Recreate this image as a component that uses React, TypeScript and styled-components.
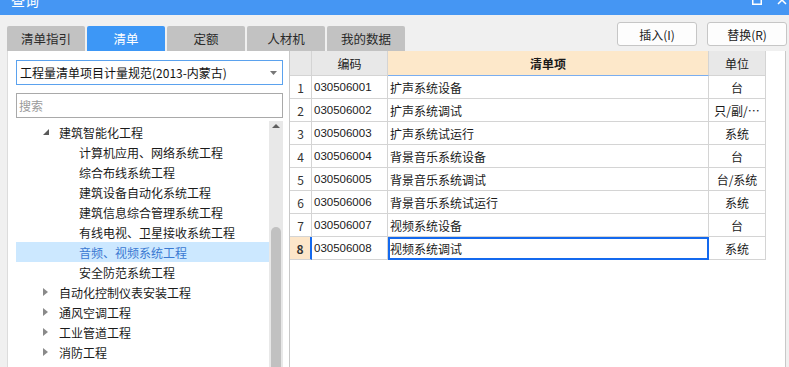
import React from 'react';
import styled, { createGlobalStyle } from 'styled-components';

const GlobalStyle = createGlobalStyle`
  html, body { margin: 0; padding: 0; background: #f0f0f0; }
  body {
    font-family: "Noto Sans CJK SC", "Liberation Sans", sans-serif;
    font-size: 12px;
    color: #1a1a1a;
  }
  * { box-sizing: border-box; }
`;

const Window = styled.div`
  width: 789px;
  height: 367px;
  overflow: hidden;
  display: flex;
  flex-direction: column;
  background: #f0f0f0;
`;

const TitleBar = styled.div`
  flex: none;
  height: 30px;
  margin-top: -15px;
  background: #4596f3;
  color: #fff;
  display: flex;
  align-items: center;
  padding: 0 2px 0 11px;
`;

const Title = styled.div`
  flex: 1;
  font-size: 14px;
  line-height: 1;
`;

const WinControls = styled.div`
  display: flex;
  align-items: center;
  gap: 15px;
`;

const Toolbar = styled.div`
  flex: none;
  height: 36px;
  display: flex;
  align-items: flex-start;
  padding: 0 2px 0 7px;
`;

const Tabs = styled.div`
  flex: 1;
  align-self: flex-end;
  display: flex;
  gap: 2px;
`;

const Tab = styled.div<{ $active?: boolean }>`
  width: 78px;
  height: 25px;
  border-radius: 2px 2px 0 0;
  background: ${(p) => (p.$active ? '#3d97f6' : '#c2c2c2')};
  color: ${(p) => (p.$active ? '#ffffff' : '#2a2a2a')};
  display: flex;
  align-items: center;
  justify-content: center;
  font-size: 12.5px;
`;

const Actions = styled.div`
  display: flex;
  gap: 10px;
  margin-top: 7px;
`;

const Button = styled.button`
  width: 80px;
  height: 24px;
  padding: 0;
  border: 1px solid #c6c6c6;
  border-radius: 3px;
  background: #fdfdfd;
  color: #222;
  font-family: inherit;
  font-size: 12px;
`;

const Body = styled.div`
  flex: 1;
  min-height: 0;
  display: flex;
  padding-left: 7px;
`;

const LeftPanel = styled.div`
  flex: none;
  width: 282px;
  background: #fff;
  border-left: 1px solid #dcdcdc;
  padding: 9px 6px 0 8px;
  display: flex;
  flex-direction: column;
`;

const Combo = styled.div`
  flex: none;
  height: 25px;
  border: 1px solid #5ba2ee;
  display: flex;
  align-items: center;
  justify-content: space-between;
  padding: 0 5px 0 3px;
  color: #111;
  font-size: 12px;
`;

const Search = styled.div`
  flex: none;
  height: 25px;
  margin-top: 8px;
  border: 1px solid #a9a9a9;
  display: flex;
  align-items: center;
  padding-left: 2px;
  color: #9a9a9a;
`;

const TreeArea = styled.div`
  flex: 1;
  min-height: 0;
  margin-top: 3px;
  display: flex;
`;

const TreeList = styled.div`
  flex: 1;
  padding-top: 1px;
  overflow: hidden;
`;

const TreeRow = styled.div<{ $indent: number; $selected?: boolean }>`
  height: 20px;
  display: flex;
  align-items: center;
  padding-left: ${(p) => p.$indent}px;
  background: ${(p) => (p.$selected ? '#cce8ff' : 'transparent')};
  color: ${(p) => (p.$selected ? '#3a79d2' : '#1a1a1a')};
  white-space: nowrap;
`;

const Toggle = styled.span`
  width: 16px;
  flex: none;
  display: flex;
  align-items: center;
`;

const Scrollbar = styled.div`
  flex: none;
  width: 14px;
  background: #e8e8e8;
  display: flex;
  flex-direction: column;
`;

const ScrollArrow = styled.div`
  flex: none;
  height: 12px;
  display: flex;
  justify-content: center;
  padding-top: 3px;
`;

const Thumb = styled.div`
  flex: 1;
  margin: 94px 2px 0;
  border-radius: 5px 5px 0 0;
  background: #c1c1c1;
`;

const RightPanel = styled.div`
  flex: none;
  width: 497px;
  background: #fff;
  border-left: 1px solid #c8c8c8;
  border-right: 1px solid #c8c8c8;
`;

const GridRow = styled.div<{ $header?: boolean }>`
  display: grid;
  grid-template-columns: 22px 76px 321px 57px;
  height: ${(p) => (p.$header ? 25 : 23)}px;
`;

const Cell = styled.div<{
  $bg?: string;
  $align?: 'left' | 'center';
  $mono?: boolean;
  $bold?: boolean;
  $bottom?: string;
}>`
  display: flex;
  align-items: center;
  justify-content: ${(p) => (p.$align === 'left' ? 'flex-start' : 'center')};
  padding: ${(p) => (p.$align === 'left' ? '0 0 0 2px' : '0')};
  border-right: 1px solid #d4d4d4;
  border-bottom: 1px solid ${(p) => p.$bottom || '#d4d4d4'};
  background: ${(p) => p.$bg || '#fff'};
  font-family: ${(p) =>
    p.$mono ? '"Liberation Sans", Arial, sans-serif' : 'inherit'};
  font-size: ${(p) => (p.$mono ? '11.5px' : '12px')};
  font-weight: ${(p) => (p.$bold ? 700 : 400)};
  color: #1a1a1a;
  white-space: nowrap;
  overflow: hidden;
`;

const NumCell = styled(Cell)<{ $current?: boolean }>`
  ${(p) => (p.$current ? 'border-right: 2px solid #1469ee;' : '')}
  font-size: 12px;
  color: #333;
`;

const NameCell = styled(Cell)<{ $current?: boolean }>`
  ${(p) => (p.$current ? 'outline: 2px solid #1469ee; outline-offset: -2px;' : '')}
`;

const ExpandedIcon = () => (
  <svg width="6" height="6" viewBox="0 0 6 6">
    <path d="M6 0 L6 6 L0 6 Z" fill="#5a5a5a" />
  </svg>
);

const CollapsedIcon = () => (
  <svg width="5" height="8" viewBox="0 0 5 8">
    <path d="M0 0 L5 4 L0 8 Z" fill="#8a8a8a" />
  </svg>
);

type TreeItem = {
  label: string;
  level: 1 | 2;
  expanded?: boolean;
  selected?: boolean;
};

const tree: TreeItem[] = [
  { label: '建筑智能化工程', level: 1, expanded: true },
  { label: '计算机应用、网络系统工程', level: 2 },
  { label: '综合布线系统工程', level: 2 },
  { label: '建筑设备自动化系统工程', level: 2 },
  { label: '建筑信息综合管理系统工程', level: 2 },
  { label: '有线电视、卫星接收系统工程', level: 2 },
  { label: '音频、视频系统工程', level: 2, selected: true },
  { label: '安全防范系统工程', level: 2 },
  { label: '自动化控制仪表安装工程', level: 1 },
  { label: '通风空调工程', level: 1 },
  { label: '工业管道工程', level: 1 },
  { label: '消防工程', level: 1 },
];

const rows = [
  ['030506001', '扩声系统设备', '台'],
  ['030506002', '扩声系统调试', '只/副/…'],
  ['030506003', '扩声系统试运行', '系统'],
  ['030506004', '背景音乐系统设备', '台'],
  ['030506005', '背景音乐系统调试', '台/系统'],
  ['030506006', '背景音乐系统试运行', '系统'],
  ['030506007', '视频系统设备', '台'],
  ['030506008', '视频系统调试', '系统'],
];

const tabs = ['清单指引', '清单', '定额', '人材机', '我的数据'];

export default function App() {
  return (
    <Window>
      <GlobalStyle />
      <TitleBar>
        <Title>查询</Title>
        <WinControls>
          <svg width="10" height="10" viewBox="0 0 10 10">
            <rect x="0.75" y="0.75" width="8.5" height="8.5" fill="none" stroke="#fff" strokeWidth="1.5" />
          </svg>
          <svg width="10" height="10" viewBox="0 0 10 10">
            <path d="M1 1 L9 9 M9 1 L1 9" stroke="#fff" strokeWidth="1.5" />
          </svg>
        </WinControls>
      </TitleBar>
      <Toolbar>
        <Tabs>
          {tabs.map((t) => (
            <Tab key={t} $active={t === '清单'}>
              {t}
            </Tab>
          ))}
        </Tabs>
        <Actions>
          <Button>插入(I)</Button>
          <Button>替换(R)</Button>
        </Actions>
      </Toolbar>
      <Body>
        <LeftPanel>
          <Combo>
            <span>工程量清单项目计量规范(2013-内蒙古)</span>
            <svg width="7" height="4" viewBox="0 0 7 4">
              <path d="M0 0 L7 0 L3.5 4 Z" fill="#777" />
            </svg>
          </Combo>
          <Search>搜索</Search>
          <TreeArea>
            <TreeList>
              {tree.map((it) => (
                <TreeRow
                  key={it.label}
                  $indent={it.level === 1 ? 27 : 63}
                  $selected={it.selected}
                >
                  {it.level === 1 && (
                    <Toggle>{it.expanded ? <ExpandedIcon /> : <CollapsedIcon />}</Toggle>
                  )}
                  <span>{it.label}</span>
                </TreeRow>
              ))}
            </TreeList>
            <Scrollbar>
              <ScrollArrow>
                <svg width="8" height="4" viewBox="0 0 8 4">
                  <path d="M0 4 L8 4 L4 0 Z" fill="#606060" />
                </svg>
              </ScrollArrow>
              <Thumb />
            </Scrollbar>
          </TreeArea>
        </LeftPanel>
        <RightPanel>
          <GridRow $header>
            <Cell $bg="#e8e8e8" />
            <Cell $bg="#e8e8e8">编码</Cell>
            <Cell $bg="#fde8ca" $bold $bottom="#7aaef0">
              清单项
            </Cell>
            <Cell $bg="#e8e8e8">单位</Cell>
          </GridRow>
          {rows.map(([code, name, unit], i) => {
            const current = i === rows.length - 1;
            return (
              <GridRow key={code}>
                <NumCell $current={current} $bg={current ? '#fde6c9' : '#fff'} $bold={current}>
                  {i + 1}
                </NumCell>
                <Cell $align="left" $mono>
                  {code}
                </Cell>
                <NameCell $align="left" $current={current}>
                  {name}
                </NameCell>
                <Cell>{unit}</Cell>
              </GridRow>
            );
          })}
        </RightPanel>
      </Body>
    </Window>
  );
}
